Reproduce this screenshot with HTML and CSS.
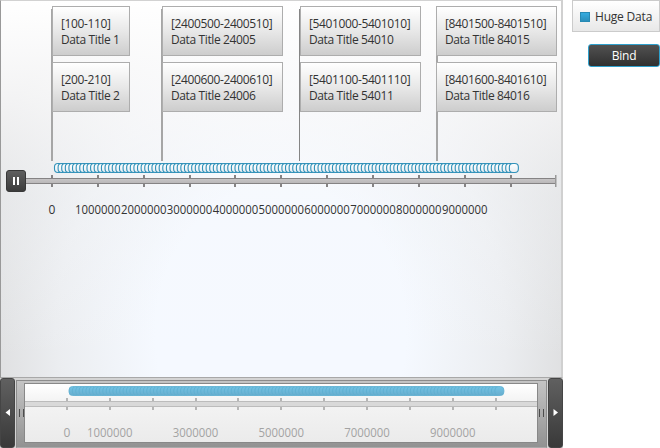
FILE: index.html
```html
<!DOCTYPE html>
<html lang="en">
<head>
<meta charset="utf-8">
<title>Timeline</title>
<link rel="stylesheet" href="styles.css">
</head>
<body>
<div class="page">
  <main class="timeline">
    <section class="plot">
      <div class="events">
        <div class="column">
          <article class="card">[100-110]<br>Data Title 1</article>
          <article class="card">[200-210]<br>Data Title 2</article>
        </div>
        <div class="column">
          <article class="card">[2400500-2400510]<br>Data Title 24005</article>
          <article class="card">[2400600-2400610]<br>Data Title 24006</article>
        </div>
        <div class="column">
          <article class="card">[5401000-5401010]<br>Data Title 54010</article>
          <article class="card">[5401100-5401110]<br>Data Title 54011</article>
        </div>
        <div class="column last">
          <article class="card">[8401500-8401510]<br>Data Title 84015</article>
          <article class="card">[8401600-8401610]<br>Data Title 84016</article>
        </div>
      </div>
      <svg class="axis" width="560" height="60" viewBox="1 161 560 60">
        <defs>
          <linearGradient id="bar" x2="0" y2="1"><stop stop-color="#c9c7c8"/><stop offset="1" stop-color="#b7b5b6"/></linearGradient>
          <linearGradient id="dark" x2="0" y2="1"><stop stop-color="#606060"/><stop offset="1" stop-color="#3b3b3b"/></linearGradient>
          <linearGradient id="point" x2="0" y2="1"><stop stop-color="#ffffff"/><stop offset="1" stop-color="#e6eef3"/></linearGradient>
        </defs>
        <g id="points"></g>
        <rect x="25" y="178" width="531" height="6" fill="url(#bar)"/>
        <path d="M25 178.5H556M25 183.5H556" stroke="#858384"/>
        <g id="ticks" fill="#858384"></g>
        <rect x="555" y="175" width="1.5" height="12" fill="#999"/>
        <rect x="6.5" y="170.5" width="19" height="21" rx="2.5" fill="url(#dark)" stroke="#383838"/>
        <path d="M13 177h2v8h-2zM17 177h2v8h-2z" fill="#fff"/>
        <g id="labels" class="label"></g>
      </svg>
    </section>
    <section class="scroller">
      <button class="arrow" aria-label="Back"><svg width="15" height="70"><path d="M10 31v7l-4.500-3.500z" fill="#fff"/></svg></button>
      <div class="track">
        <div class="handle"></div>
        <svg class="overview" width="512" height="58" viewBox="25 384 512 58">
          <defs><linearGradient id="mini" x2="0" y2="1"><stop stop-color="#71c4e6"/><stop offset="1" stop-color="#69adcd"/></linearGradient></defs>
          <g id="mini-points"></g>
          <rect x="25" y="401" width="512" height="6" fill="#d9d9d9"/>
          <path d="M25 401.500H537M25 406.500H537" stroke="#bcbcbc"/>
          <g id="mini-ticks" fill="#b5b5b5"></g>
          <g id="mini-labels" class="label faint"></g>
        </svg>
        <div class="handle"></div>
      </div>
      <button class="arrow" aria-label="Forward"><svg width="15" height="70"><path d="M5.500 31v7l4.500-3.500z" fill="#fff"/></svg></button>
    </section>
  </main>
  <aside class="side">
    <div class="legend"><span class="swatch"></span>Huge Data</div>
    <button class="bind">Bind</button>
  </aside>
</div>
<script src="timeline.js"></script>
</body>
</html>
```
FILE: styles.css
```css
* { box-sizing: border-box; }
body {
  margin: 0;
  background: #fff;
  color: #333;
  font: 12px/16px "Open Sans", "Noto Sans", sans-serif;
  letter-spacing: -0.2px;
  overflow: hidden;
}
button { padding: 0; font: inherit; letter-spacing: inherit; }
.page { display: flex; justify-content: space-between; width: 660px; height: 448px; }
.timeline { width: 563px; }
.plot {
  height: 378px;
  border: 1px solid #a8a8a8;
  border-top-color: #d2d2d2;
  border-left-color: #999;
  border-right: 2px solid #d0d0d0;
  background:
    linear-gradient(#fff 0, rgba(252,252,253,.78) 25%, rgba(247,249,252,.4) 52%, rgba(245,249,255,0) 95%),
    radial-gradient(ellipse 330px 390px at 50% 88%, #f5f9ff 38%, #ebedf0 68%, #d6d6d6 100%);
}
.events { display: flex; height: 160px; padding: 5px 0 0 51px; }
.column { position: relative; display: flex; flex-direction: column; gap: 6px; width: 78px; margin-right: 32px; }
.column:nth-child(2) { width: 121px; margin-right: 17px; }
.column:nth-child(3) { width: 121px; margin-right: 16px; }
.column.last { width: 120px; margin-right: 0; }
.column::before {
  content: "";
  position: absolute;
  left: -1px;
  top: 3px;
  width: 1px;
  height: 152px;
  background: #858585;
}
.column.last::before { left: -1px; width: 2px; background: #a6a6a6; }
.column:nth-child(-n+2)::before { left: -1px; width: 2px; background: #a6a6a6; }
.card {
  position: relative;
  height: 50px;
  padding: 9px 0 0 8px;
  border: 1px solid #adadad;
  background: linear-gradient(#fff, #e7e7e7 52%, #cdcdcd);
  letter-spacing: -0.38px;
  white-space: nowrap;
}
.last .card { margin-left: -1px; }
.card + .card { line-height: 15.5px; }
.axis, .overview { display: block; }
.label { fill: #333; text-anchor: middle; letter-spacing: 0; }
.faint { fill: #a3a3a3; }
.scroller { display: flex; gap: 1px; height: 70px; background: #d4d4d4; }
.arrow { width: 15px; height: 70px; border: 1px solid #454545; border-radius: 3px; background: linear-gradient(#606060, #393939); }
.arrow svg { display: block; margin: -1px; }
.track {
  display: grid;
  grid-template-columns: 8px 512px 9px;
  width: 531px;
  height: 68px;
  margin-top: 2px;
  border: 1px solid #8c8c8c;
  border-bottom-color: #aaa;
  background: linear-gradient(#c4c4c4, #929292);
}
.handle { display: flex; align-items: center; justify-content: center; height: 63px; }
.handle::before { content: ""; width: 3px; height: 8px; border: solid #4c4c4c; border-width: 0 1px; }
.overview { margin-top: 3px; background: linear-gradient(#fff 0, #f4f4f4 16px, #ebebeb); outline: 1px solid #888; }
.side { width: 88px; }
.legend {
  display: flex;
  align-items: center;
  height: 32px;
  padding: 1px 0 0 7px;
  border: 1px solid #cbcbcb;
  background: linear-gradient(#fff, #e8e8e8);
  white-space: nowrap;
}
.swatch { width: 10px; height: 10px; margin-right: 5px; border: 1px solid #278ab4; background: linear-gradient(#36ace0, #2c8fbb); }
.bind {
  display: block;
  width: 72px;
  height: 23px;
  margin: 12px 0 0 16px;
  border: 1px solid #2fa0cc;
  border-radius: 3px;
  background: linear-gradient(#515151, #303030);
  color: #fff;
}
```
FILE: timeline.js
```js
const NS = "http://www.w3.org/2000/svg";

function add(groupId, name, attrs, text) {
  const node = document.createElementNS(NS, name);
  for (const key in attrs) node.setAttribute(key, attrs[key]);
  if (text !== undefined) node.textContent = text;
  document.getElementById(groupId).appendChild(node);
}

function label(groupId, i, x, y) {
  const attrs = { x: x, y: y };
  if (i) { attrs.textLength = 45.5; attrs.lengthAdjust = "spacingAndGlyphs"; }
  add(groupId, "text", attrs, String(i * 1000000));
}

for (let i = 0; i <= 126; i++) {
  add("points", "rect", {
    x: 54.5 + i * 3.61, y: 163.5, width: 9, height: 9, rx: 3.5,
    fill: "url(#point)", stroke: "#3191b9", "stroke-width": 1.1
  });
  add("mini-points", "rect", {
    x: 69 + i * 3.38, y: 386.5, width: 9, height: 9, rx: 3.5,
    fill: "url(#mini)", stroke: "#5daed0", "stroke-width": 0.8
  });
}

for (let i = 0; i <= 10; i++) {
  const x = Math.round(51 + i * 45.85);
  const m = Math.round(66 + i * 42.85);
  for (const y of [175, 184]) add("ticks", "rect", { x: x, y: y, width: 2, height: 3 });
  for (const y of [398, 407]) add("mini-ticks", "rect", { x: m, y: y, width: 2, height: 3 });
  if (i < 10) label("labels", i, 52 + i * 45.85, 214);
  if (i === 0 || (i % 2 && i < 10)) label("mini-labels", i, 67 + i * 42.85, 437);
}
```
